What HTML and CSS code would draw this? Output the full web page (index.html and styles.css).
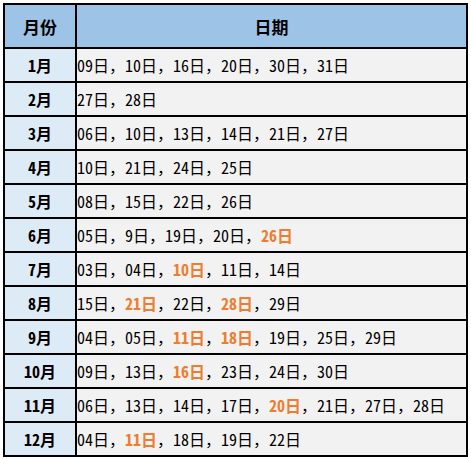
FILE: index.html
```html
<!DOCTYPE html>
<html lang="zh">
<head>
<meta charset="utf-8">
<link rel="stylesheet" href="styles.css">
</head>
<body>
<div class="page">
<table class="sched">
  <thead>
    <tr class="head-row"><th class="h-month">月份</th><th class="h-date">日期</th></tr>
  </thead>
  <tbody>
    <tr><td class="m">1月</td><td class="d">09日，10日，16日，20日，30日，31日</td></tr>
    <tr><td class="m">2月</td><td class="d">27日，28日</td></tr>
    <tr><td class="m">3月</td><td class="d">06日，10日，13日，14日，21日，27日</td></tr>
    <tr><td class="m">4月</td><td class="d">10日，21日，24日，25日</td></tr>
    <tr><td class="m">5月</td><td class="d">08日，15日，22日，26日</td></tr>
    <tr><td class="m">6月</td><td class="d">05日，9日，19日，20日，<b class="hl">26日</b></td></tr>
    <tr><td class="m">7月</td><td class="d">03日，04日，<b class="hl">10日</b>，11日，14日</td></tr>
    <tr><td class="m">8月</td><td class="d">15日，<b class="hl">21日</b>，22日，<b class="hl">28日</b>，29日</td></tr>
    <tr><td class="m">9月</td><td class="d">04日，05日，<b class="hl">11日</b>，<b class="hl">18日</b>，19日，25日，29日</td></tr>
    <tr><td class="m">10月</td><td class="d">09日，13日，<b class="hl">16日</b>，23日，24日，30日</td></tr>
    <tr><td class="m">11月</td><td class="d">06日，13日，14日，17日，<b class="hl">20日</b>，21日，27日，28日</td></tr>
    <tr><td class="m">12月</td><td class="d">04日，<b class="hl">11日</b>，18日，19日，22日</td></tr>
  </tbody>
</table>
</div>
</body>
</html>
```

FILE: styles.css
```css
html, body {
  margin: 0;
  padding: 0;
  background: #ffffff;
}
.page {
  padding: 3px 0 0 3px;
}
.sched {
  border-collapse: collapse;
  width: 465px;
  border: 2px solid #000;
  font-family: "Noto Sans Mono CJK SC", "Noto Sans CJK SC", sans-serif;
  font-size: 16px;
  color: #000;
}
.sched th, .sched td {
  border: 2px solid #000;
  padding: 0;
}
.head-row th {
  height: 42px;
  background: #9dc3e6;
  font-weight: bold;
  font-size: 17px;
  text-align: center;
}
.h-month {
  width: 70px;
}
.sched td {
  height: 32px;
}
.m {
  background: #ddebf7;
  font-weight: bold;
  text-align: center;
}
.d {
  background: #f2f2f2;
  text-align: left;
  padding-left: 2px;
  white-space: nowrap;
}
.hl {
  color: #ed7d31;
  font-weight: bold;
}
```
